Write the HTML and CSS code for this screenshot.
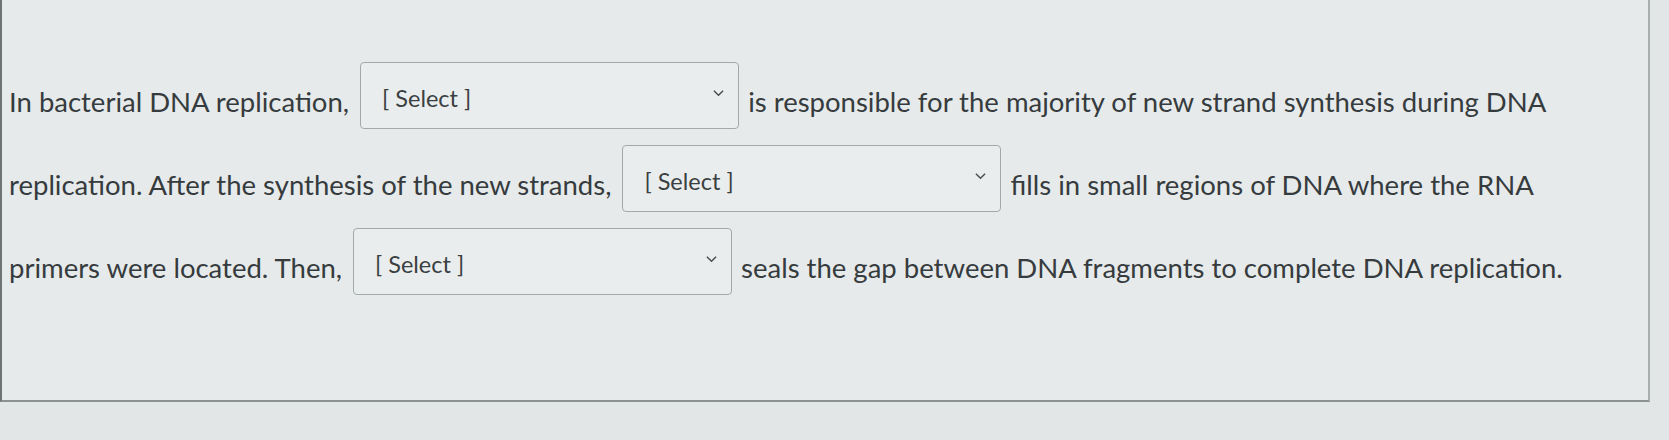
FILE: index.html
```html
<!DOCTYPE html>
<html lang="en">
<head>
<meta charset="utf-8">
<title>DNA replication question</title>
<link rel="stylesheet" href="styles.css">
</head>
<body>
<div class="panel">
  <p class="question">In bacterial DNA replication, <span class="select"><span class="select-label">[ Select ]</span><svg class="chev" viewBox="0 0 12 8" width="11" height="8"><path d="M1 1.5 L6 6.5 L11 1.5" fill="none" stroke="#4a4f52" stroke-width="1.6"/></svg></span> is responsible for the majority of new strand synthesis during DNA<br>replication. After the synthesis of the new strands, <span class="select"><span class="select-label">[ Select ]</span><svg class="chev" viewBox="0 0 12 8" width="11" height="8"><path d="M1 1.5 L6 6.5 L11 1.5" fill="none" stroke="#4a4f52" stroke-width="1.6"/></svg></span> fills in small regions of DNA where the RNA<br>primers were located. Then, <span class="select"><span class="select-label">[ Select ]</span><svg class="chev" viewBox="0 0 12 8" width="11" height="8"><path d="M1 1.5 L6 6.5 L11 1.5" fill="none" stroke="#4a4f52" stroke-width="1.6"/></svg></span> seals the gap between DNA fragments to complete DNA replication.</p>
</div>
</body>
</html>
```

FILE: styles.css
```css
html, body {
  margin: 0;
  padding: 0;
  background: #e2e6e6;
}
body {
  width: 1669px;
  height: 440px;
  overflow: hidden;
  font-family: Lato, "Open Sans", sans-serif;
  color: #363b3e;
}
.panel {
  width: 1646px;
  height: 400px;
  background: #e6eaea;
  border-left: 2px solid #6f7577;
  border-right: 2px solid #a9afb0;
  border-bottom: 2px solid #8b9192;
  box-sizing: content-box;
}
.question {
  margin: 0;
  padding: 60px 20px 0 7px;
  font-size: 27.5px;
  line-height: 83px;
  white-space: nowrap;
}
.select {
  display: inline-flex;
  align-items: center;
  justify-content: space-between;
  box-sizing: border-box;
  width: 379px;
  height: 67px;
  margin: 0 2px 0 4px;
  padding: 0 14px 0 21px;
  vertical-align: 5px;
  border: 1.5px solid #a3a9aa;
  border-radius: 4px;
  background: #eaeded;
  font-size: 23.5px;
  line-height: 1;
  color: #3a3f42;
}
.select-label {
  display: inline-block;
  padding-top: 6px;
}
.chev {
  display: block;
  margin-bottom: 6px;
}
```
